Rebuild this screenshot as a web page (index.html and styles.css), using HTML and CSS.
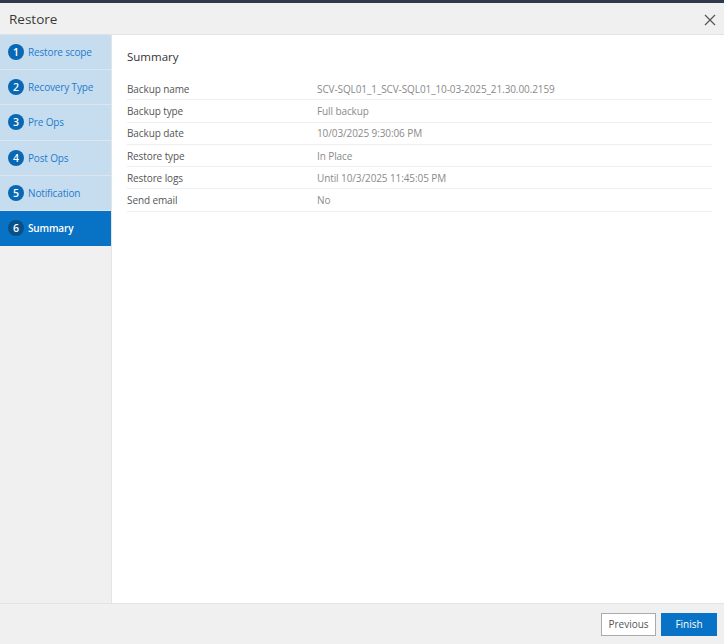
FILE: index.html
```html
<!DOCTYPE html>
<html>
<head>
<meta charset="utf-8">
<link rel="stylesheet" href="styles.css">
</head>
<body>
<div class="topbar"></div>
<div class="dialog">
  <div class="header">
    <span class="title">Restore</span>
    <svg class="close" width="12" height="12" viewBox="0 0 12 12"><path d="M1 1L11 11M11 1L1 11" stroke="#555" stroke-width="1.2" fill="none"/></svg>
  </div>
  <div class="body">
    <div class="sidebar">
      <div class="step"><span class="num">1</span><span class="label">Restore scope</span></div>
      <div class="step"><span class="num">2</span><span class="label">Recovery Type</span></div>
      <div class="step"><span class="num">3</span><span class="label">Pre Ops</span></div>
      <div class="step"><span class="num">4</span><span class="label">Post Ops</span></div>
      <div class="step"><span class="num">5</span><span class="label">Notification</span></div>
      <div class="step active"><span class="num">6</span><span class="label">Summary</span></div>
    </div>
    <div class="content">
      <h2 class="heading">Summary</h2>
      <div class="table">
        <div class="row"><span class="key">Backup name</span><span class="val">SCV-SQL01_1_SCV-SQL01_10-03-2025_21.30.00.2159</span></div>
        <div class="row"><span class="key">Backup type</span><span class="val">Full backup</span></div>
        <div class="row"><span class="key">Backup date</span><span class="val">10/03/2025 9:30:06 PM</span></div>
        <div class="row"><span class="key">Restore type</span><span class="val">In Place</span></div>
        <div class="row"><span class="key">Restore logs</span><span class="val">Until 10/3/2025 11:45:05 PM</span></div>
        <div class="row"><span class="key">Send email</span><span class="val">No</span></div>
      </div>
    </div>
  </div>
  <div class="footer">
    <button class="btn prev">Previous</button>
    <button class="btn finish">Finish</button>
  </div>
</div>
</body>
</html>
```
FILE: styles.css
```css
* { box-sizing: border-box; }
html, body { margin: 0; padding: 0; }
body {
  width: 724px;
  height: 644px;
  overflow: hidden;
  font-family: "Open Sans", "Noto Sans", sans-serif;
  background: #f0f0f0;
}
.topbar { height: 3px; background: #2c3a4c; }
.dialog { display: flex; flex-direction: column; height: 641px; }
.header {
  height: 32px;
  background: #f0f0f0;
  border-bottom: 1px solid #e2e2e2;
  display: flex;
  align-items: center;
  justify-content: space-between;
  padding: 0 8px 0 9px;
}
.title { font-size: 13.5px; color: #3a3a3a; }
.close { margin-top: 2px; }
.body { flex: 1; display: flex; min-height: 0; }
.sidebar {
  width: 112px;
  background: #f0f0f0;
  border-right: 1px solid #e4e4e4;
  display: flex;
  flex-direction: column;
}
.step {
  height: 35.2px;
  background: #c6ddf0;
  border-bottom: 1px solid #dde6ee;
  display: flex;
  align-items: center;
  padding-left: 8px;
  gap: 4px;
}
.step .num {
  width: 16px; height: 16px;
  border-radius: 50%;
  background: #0868b3;
  color: #fff;
  font-size: 10.5px;
  font-weight: 600;
  display: flex; align-items: center; justify-content: center;
}
.step .label { font-size: 10px; color: #1f7ccc; letter-spacing: -0.15px; }
.step.active { background: #0872c4; border-bottom-color: #0872c4; }
.step.active .num { background: #0a4f86; }
.step.active .label { color: #fff; font-weight: 600; }
.content {
  flex: 1;
  background: #fff;
  padding: 14px 12px 0 15px;
}
.heading {
  margin: 0 0 14px;
  font-size: 11.5px;
  font-weight: 400;
  color: #333;
}
.row {
  display: flex;
  height: 22.3px;
  align-items: center;
  border-bottom: 1px solid #eeeeee;
  font-size: 10px;
  letter-spacing: -0.1px;
}
.key { width: 190px; color: #555; }
.val { color: #8a8a8a; }
.footer {
  height: 41px;
  background: #f0f0f0;
  border-top: 1px solid #e4e4e4;
  display: flex;
  justify-content: flex-end;
  align-items: center;
  gap: 5px;
  padding: 0 7px 0 0;
}
.btn {
  height: 23px;
  font-family: "Open Sans", "Noto Sans", sans-serif;
  font-size: 10px;
  border-radius: 0;
  cursor: pointer;
}
.prev { width: 55px; background: #fff; border: 1px solid #aaa; color: #555; }
.finish { width: 56px; background: #0873c6; border: 1px solid #0873c6; color: #fff; }
```
